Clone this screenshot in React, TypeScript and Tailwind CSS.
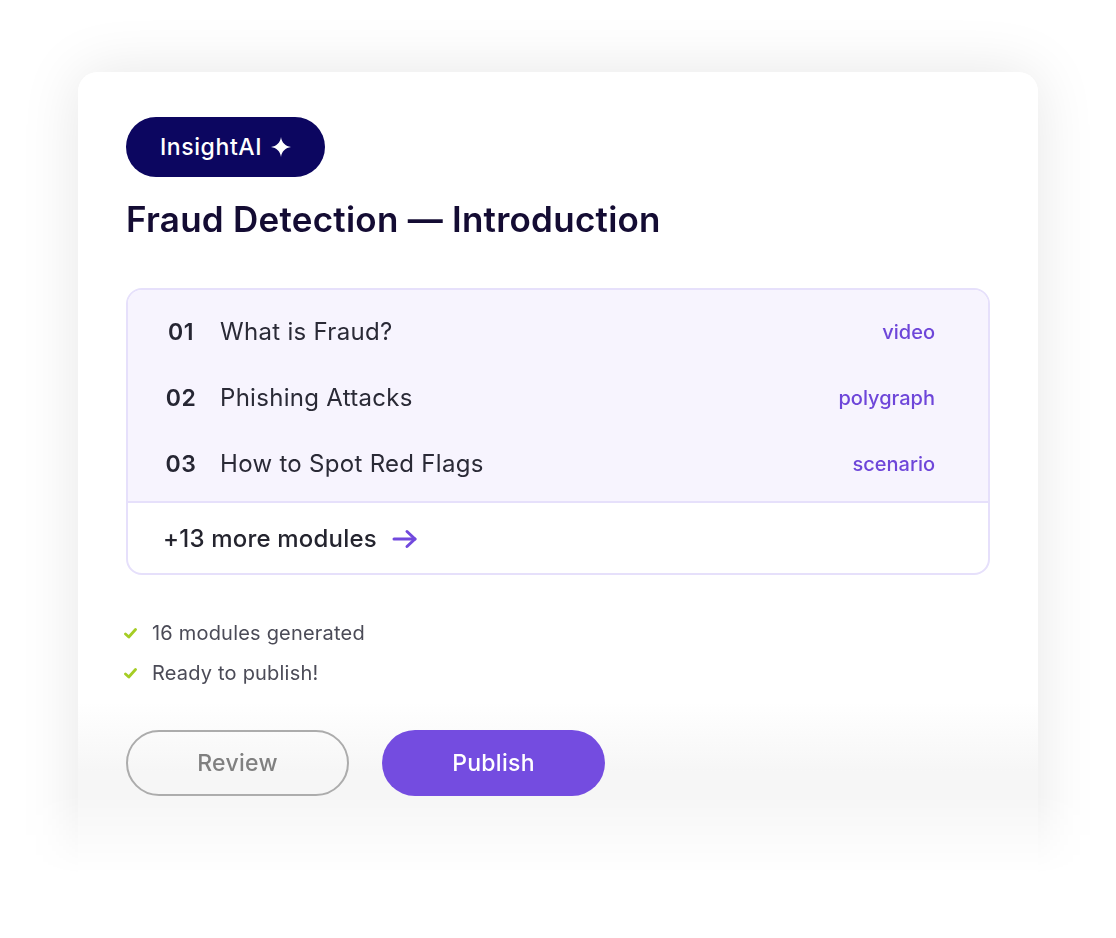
import React from "react";

const rows = [
  { n: "01", t: "What is Fraud?", tag: "video" },
  { n: "02", t: "Phishing Attacks", tag: "polygraph" },
  { n: "03", t: "How to Spot Red Flags", tag: "scenario" },
];

function Sparkle() {
  return (
    <svg width="20" height="20" viewBox="0 0 20 20" className="shrink-0">
      <path
        d="M10 0 C10.6 5.4 14.6 9.4 20 10 C14.6 10.6 10.6 14.6 10 20 C9.4 14.6 5.4 10.6 0 10 C5.4 9.4 9.4 5.4 10 0 Z"
        fill="#ffffff"
      />
    </svg>
  );
}

function Arrow() {
  return (
    <svg width="26" height="20" viewBox="0 0 26 20" fill="none" className="shrink-0">
      <path d="M2 10 H23" stroke="#7149dd" strokeWidth="3" strokeLinecap="round" />
      <path d="M15 2.5 L23 10 L15 17.5" stroke="#7149dd" strokeWidth="3" strokeLinecap="round" strokeLinejoin="round" />
    </svg>
  );
}

function Check() {
  return (
    <svg width="13" height="11" viewBox="0 0 13 11" fill="none" className="shrink-0">
      <path d="M1.5 6 L4.8 9 L11.5 1.5" stroke="#a5cd24" strokeWidth="2.8" strokeLinecap="round" strokeLinejoin="round" />
    </svg>
  );
}

export default function App() {
  return (
    <div className="w-[1116px] h-[938px] bg-white overflow-hidden font-['Inter',sans-serif]">
      <div className="h-[938px] pt-[72px] pl-[78px] [mask-image:linear-gradient(to_bottom,#000_0,#000_795px,transparent_875px)]">
        <div className="w-[960px] h-[860px] rounded-[20px] bg-[linear-gradient(to_bottom,#ffffff_0,#ffffff_630px,#f6f6f6_700px,#f6f6f6_860px)] shadow-[0_0_60px_rgba(0,0,0,0.1)] px-[48px] pt-[45px]">
          <div className="inline-flex items-center gap-[9px] h-[60px] w-[199px] justify-center rounded-full bg-[#0c0660] text-white text-[23px] tracking-[0.6px] font-medium">
            <span>InsightAI</span>
            <Sparkle />
          </div>
          <h1 className="mt-[22px] text-[35px] leading-[40px] font-semibold text-[#140c33] tracking-[0.25px]">
            Fraud Detection — Introduction
          </h1>

          <div className="mt-[49px] w-[864px] rounded-[16px] border-2 border-[#e6e0fb] overflow-hidden">
            <div className="bg-[#f7f4fe] pt-[9px] pb-[4px] border-b-2 border-[#e6e0fb]">
              {rows.map((r) => (
                <div key={r.n} className="h-[66px] flex items-center pl-[36px] pr-[53px]">
                  <span className="w-[34px] text-center text-[23px] tracking-[0.5px] font-semibold text-[#262633]">{r.n}</span>
                  <span className="ml-[22px] text-[24px] tracking-[0.3px] text-[#2a2a36]">{r.t}</span>
                  <span className="ml-auto text-[20px] font-medium text-[#6e46d9]">{r.tag}</span>
                </div>
              ))}
            </div>
            <div className="h-[70px] flex items-center pl-[35px] pt-[2px] gap-[15px]">
              <span className="text-[24px] tracking-[0.2px] font-medium text-[#24242e]">+13 more modules</span>
              <Arrow />
            </div>
          </div>

          <div className="mt-[38px] flex flex-col">
            {["16 modules generated", "Ready to publish!"].map((s) => (
              <div key={s} className="h-[40px] flex items-center">
                <span className="w-[28px] -ml-[2px] flex"><Check /></span>
                <span className="text-[20px] tracking-[0.2px] text-[#4b4b57]">{s}</span>
              </div>
            ))}
          </div>

          <div className="mt-[37px] flex gap-[33px]">
            <button className="w-[223px] h-[66px] rounded-full border-2 border-[#acacac] text-[23px] tracking-[0.3px] font-medium text-[#808080]">
              Review
            </button>
            <button className="w-[223px] h-[66px] rounded-full bg-[#744ce0] text-[23px] tracking-[0.3px] font-medium text-white">
              Publish
            </button>
          </div>
        </div>
      </div>
    </div>
  );
}
